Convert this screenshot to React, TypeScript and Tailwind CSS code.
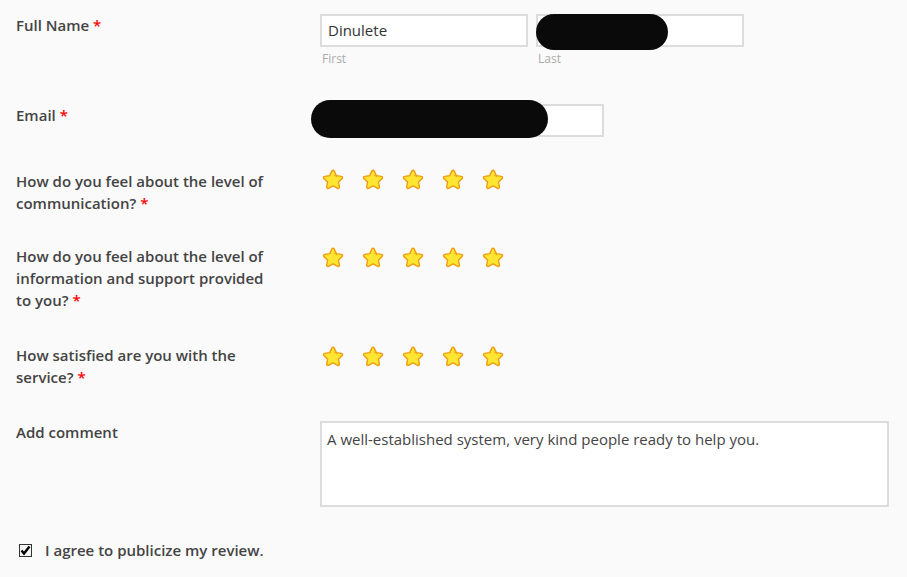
import React from 'react';

const Req = () => (
  <>
    {' '}
    <span className="text-[#ff0000]">*</span>
  </>
);

const Star = () => (
  <svg width="24" height="24" viewBox="0 0 24 24">
    <path
      d="M12 2.2c.5 0 .9.3 1.1.7l2.3 4.7 5.1.8c1 .1 1.4 1.3.7 2l-3.7 3.6.9 5.1c.2 1-.9 1.7-1.7 1.2L12 17.9l-4.6 2.4c-.9.5-1.9-.3-1.7-1.2l.9-5.1-3.7-3.6c-.7-.7-.3-1.9.7-2l5.1-.8 2.3-4.7c.1-.4.5-.7 1-.7z"
      fill="#fde631"
      stroke="#f29b12"
      strokeWidth="1.4"
      strokeLinejoin="round"
    />
    <path d="M13.6 7.6c.9.2 1.6.6 2.1 1.2" stroke="#f0a020" strokeWidth="1" fill="none" strokeLinecap="round" />
  </svg>
);

const Stars = ({ shift }: { shift: string }) => (
  <div className={`flex gap-[16px] pl-[1px] h-[24px] ${shift}`}>
    {[0, 1, 2, 3, 4].map((i) => (
      <Star key={i} />
    ))}
  </div>
);

const Scribble = ({ className }: { className: string }) => (
  <div className={`absolute bg-[#0a0a0a] rounded-full ${className}`} />
);

export default function App() {
  return (
    <div
      className="w-[907px] h-[577px] bg-[#fafafa] overflow-hidden pt-[14px] text-[15px] text-[#444]"
      style={{ fontFamily: '"Open Sans", sans-serif' }}
    >
      {/* Full name */}
      <div className="flex">
        <div className="w-[320px] shrink-0 pl-4 font-semibold leading-[22px]">
          Full Name<Req />
        </div>
        <div className="flex gap-2">
          <div className="w-[208px]">
            <div className="h-[33px] bg-white border-2 border-[#dcdcdc] px-[6px] flex items-center text-[#333]">Dinulete</div>
            <div className="text-[12px] text-[#aaa] mt-[4px] pl-[2px] leading-[16px]">First</div>
          </div>
          <div className="w-[208px] relative">
            <div className="h-[33px] bg-white border-2 border-[#dcdcdc]" />
            <div className="text-[12px] text-[#aaa] mt-[4px] pl-[2px] leading-[16px]">Last</div>
            <Scribble className="left-0 top-[0px] w-[132px] h-[36px]" />
          </div>
        </div>
      </div>

      {/* Email */}
      <div className="flex mt-[37px]">
        <div className="w-[320px] shrink-0 pl-4 font-semibold leading-[22px]">
          Email<Req />
        </div>
        <div className="relative">
          <div className="w-[284px] h-[33px] bg-white border-2 border-[#dcdcdc]" />
          <Scribble className="left-[-9px] top-[-4px] w-[237px] h-[38px]" />
        </div>
      </div>

      {/* Q1 */}
      <div className="flex mt-[33px]">
        <div className="w-[320px] shrink-0 pl-4 pr-[40px] font-semibold leading-[22px]">
          How do you feel about the level of communication?<Req />
        </div>
        <Stars shift="-mt-[2px]" />
      </div>

      {/* Q2 */}
      <div className="flex mt-[31px]">
        <div className="w-[320px] shrink-0 pl-4 pr-[40px] font-semibold leading-[22px]">
          How do you feel about the level of information and support provided to you?<Req />
        </div>
        <Stars shift="mt-[1px]" />
      </div>

      {/* Q3 */}
      <div className="flex mt-[33px]">
        <div className="w-[320px] shrink-0 pl-4 pr-[40px] font-semibold leading-[22px]">
          How satisfied are you with the service?<Req />
        </div>
        <Stars shift="mt-[1px]" />
      </div>

      {/* Comment */}
      <div className="flex mt-[33px]">
        <div className="w-[320px] shrink-0 pl-4 font-semibold leading-[22px]">Add comment</div>
        <div className="w-[569px] h-[86px] bg-white border-2 border-[#dcdcdc] px-[5px] py-[5px] text-[15px] leading-[22px] text-[#444]">
          A well-established system, very kind people ready to help you.
        </div>
      </div>

      {/* Agree */}
      <div className="flex items-center mt-[32px] pl-[19px] h-[22px]">
        <svg width="13" height="13" viewBox="0 0 13 13">
          <rect x="0.5" y="0.5" width="12" height="12" fill="#f4f4f4" stroke="#333" />
          <path d="M2.5 6.5l2.5 3 5.5-7" stroke="#000" strokeWidth="2.4" fill="none" />
        </svg>
        <span className="ml-[13px] font-semibold">I agree to publicize my review.</span>
      </div>
    </div>
  );
}
